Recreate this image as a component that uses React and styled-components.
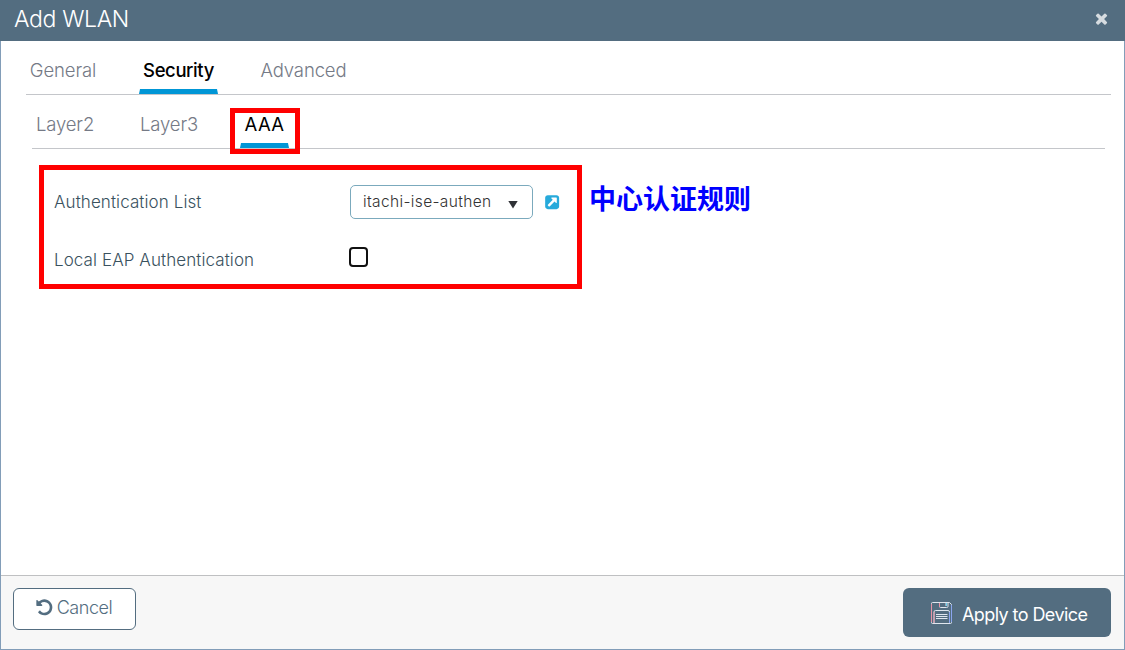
import React from 'react';
import styled, { createGlobalStyle } from 'styled-components';

const GlobalStyle = createGlobalStyle`
  * { box-sizing: border-box; }
  body { margin: 0; background: #fff; }
  button { font: inherit; }
`;

const Dialog = styled.div`
  width: 1125px;
  height: 650px;
  display: flex;
  flex-direction: column;
  background: #fff;
  font-family: Inter, 'Liberation Sans', 'Noto Sans CJK SC', sans-serif;
  font-weight: 300;
  overflow: hidden;
`;

const Header = styled.header`
  flex: none;
  height: 41px;
  display: flex;
  align-items: flex-start;
  justify-content: space-between;
  padding: 5px 17px 0 14px;
  background: #536d80;
  color: #fff;
`;

const Title = styled.h1`
  margin: 0;
  font-size: 23px;
  line-height: 28px;
  font-weight: 300;
  letter-spacing: -0.35px;
`;

const CloseButton = styled.button`
  display: flex;
  margin: 5px -2px 0 0;
  padding: 0;
  border: 0;
  background: none;
  color: #d6dce0;
`;

const Frame = styled.div`
  flex: 1;
  display: flex;
  flex-direction: column;
  border: 1px solid #829db8;
  border-top: 0;
`;

const Body = styled.main`
  flex: 1;
  padding: 0 13px 0 25px;
`;

const TabRow = styled.nav`
  display: flex;
  height: 54px;
  border-bottom: 1px solid #c4c6ca;
  margin: ${(p) => (p.$nested ? '0 6px' : '0')};
`;

const Tab = styled.div`
  position: relative;
  width: ${(p) => p.$width}px;
  margin-left: ${(p) => p.$gap || 0}px;
  padding-top: 17px;
  text-align: center;
  white-space: nowrap;
  font-size: 18.5px;
  line-height: 24px;
  letter-spacing: ${(p) => p.$spacing || '-0.12px'};
  color: ${(p) => (p.$active ? '#000' : '#757a86')};
  font-weight: ${(p) => p.$weight || 300};

  &::after {
    content: '';
    display: ${(p) => (p.$active ? 'block' : 'none')};
    position: absolute;
    left: 0;
    right: 0;
    bottom: 0;
    height: 5px;
    background: #0096d6;
    clip-path: polygon(1px 0, calc(100% - 1px) 0, 100% 100%, 0 100%);
  }
`;

const TabMarker = styled.span`
  position: absolute;
  z-index: 1;
  left: -10px;
  top: 13px;
  width: 70px;
  height: 46px;
  border: 5px solid #f00;
`;

const Content = styled.section`
  display: flex;
  align-items: flex-start;
  padding: 16px 0 0 13px;
`;

const Settings = styled.div`
  width: 543px;
  height: 124px;
  border: 5px solid #f00;
  padding: 3px 0 0 10px;
`;

const Field = styled.div`
  display: flex;
  align-items: center;
  height: 58px;
`;

const Label = styled.label`
  width: ${(p) => p.$width}px;
  font-size: 17px;
  line-height: 24px;
  color: #39515e;
  letter-spacing: 0.09px;
`;

const Select = styled.div`
  display: flex;
  align-items: center;
  justify-content: space-between;
  width: 183px;
  height: 34px;
  padding: 0 14px 2px 12px;
  border: 1px solid #7baabd;
  border-radius: 5px;
  font-size: 15.5px;
  color: #333;
  letter-spacing: 0.36px;
`;

const Caret = styled.span`
  width: 10px;
  height: 8px;
  margin-top: 7px;
  background: #2f3136;
  clip-path: polygon(0 0, 100% 0, 50% 100%);
`;

const LinkIcon = styled.span`
  display: flex;
  margin-left: 11px;
  color: #27aadb;
`;

const Checkbox = styled.span`
  width: 19px;
  height: 20px;
  margin-top: -6px;
  border: 2px solid #111;
  border-radius: 4px;
  background: #fff;
`;

const Note = styled.strong`
  margin: 13px 0 0 7px;
  font-family: 'Noto Sans CJK SC', sans-serif;
  font-size: 27px;
  line-height: 40px;
  font-weight: 700;
  color: #00f;
`;

const Footer = styled.footer`
  flex: none;
  height: 74px;
  display: flex;
  align-items: flex-start;
  justify-content: space-between;
  padding: 12px 13px 0 12px;
  border-top: 1px solid #bfc0c2;
  background: #f7f7f7;
`;

const Button = styled.button`
  display: flex;
  align-items: center;
  width: ${(p) => (p.$primary ? 208 : 123)}px;
  height: ${(p) => (p.$primary ? 49 : 42)}px;
  padding: ${(p) => (p.$primary ? '4px 0 0 28px' : '0 0 3px 21px')};
  gap: ${(p) => (p.$primary ? 10 : 3)}px;
  border: ${(p) => (p.$primary ? '0' : '1px solid #536d80')};
  border-radius: 6px;
  background: ${(p) => (p.$primary ? '#536d80' : '#fff')};
  color: ${(p) => (p.$primary ? '#fff' : '#536d80')};
  font-size: 18px;
  font-weight: ${(p) => (p.$primary ? 400 : 300)};
  letter-spacing: ${(p) => p.$spacing};
  white-space: nowrap;
`;

const SaveSvg = styled.svg`
  margin-top: -3px;
`;

const glyphs = {
  close:
    'M1490 1322q0 40-28 68l-136 136q-28 28-68 28t-68-28l-294-294-294 294q-28 28-68 28t-68-28l-136-136q-28-28-28-68t28-68l294-294-294-294q-28-28-28-68t28-68l136-136q28-28 68-28t68 28l294 294 294-294q28-28 68-28t68 28l136 136q28 28 28 68t-28 68l-294 294 294 294q28 28 28 68z',
  undo:
    'M1664 896q0 156-61 298t-164 245-245 164-298 61q-172 0-327-72.5t-264-204.5q-7-10-6.5-22.5t8.5-20.5l137-138q10-9 25-9 16 2 23 12 73 95 179 147t225 52q104 0 198.5-40.5t163.5-109.5 109.5-163.5 40.5-198.5-40.5-198.5-109.5-163.5-163.5-109.5-198.5-40.5q-98 0-188 35.5t-160 101.5l137 138q31 30 14 69-17 40-59 40h-448q-26 0-45-19t-19-45v-448q0-42 40-59 39-17 69 14l130 129q107-101 244.5-156.5t284.5-55.5q156 0 298 61t245 164 164 245 61 298z',
  external:
    'M1408 928v-480q0-26-19-45t-45-19h-480q-42 0-59 39-17 41 14 70l144 144-534 534q-19 19-19 45t19 45l102 102q19 19 45 19t45-19l534-534 144 144q18 19 45 19 12 0 25-5 39-17 39-59zm256-512v960q0 119-84.5 203.5t-203.5 84.5h-960q-119 0-203.5-84.5t-84.5-203.5v-960q0-119 84.5-203.5t203.5-84.5h960q119 0 203.5 84.5t84.5 203.5z',
};

const Glyph = ({ name, size }) => (
  <svg width={size} height={size} viewBox="0 0 1792 1792" fill="currentColor">
    <path d={glyphs[name]} />
  </svg>
);

const SaveIcon = () => (
  <SaveSvg width="21" height="22" viewBox="0 0 21 22" fill="none" stroke="#dfe6ee">
    <path d="M.5 1.5q0-1 1-1H18.500l2 2v18q0 1-1 1h-18q-1 0-1-1z" />
    <path d="M8.500.5v4q0 1 1 1h6q1.500 0 1.500-1v-4M15 1v3" />
    <path d="M3 21v-11q0-1.500 1.500-1.500h12.500q1.500 0 1.500 1.500v11" />
    <path d="M5 12.500h11.500M5 14.500h11.500M5 16.500h11.500" />
    <path d="M.5 2v18M3 10v11M8.500 1v4" stroke="#e793a5" />
    <path d="M20.500 3v17M18.500 10v11" stroke="#8aa5ef" />
    <path d="M15.500 1v3" stroke="#6fd0ee" />
  </SaveSvg>
);

export default function App() {
  return (
    <Dialog>
      <GlobalStyle />
      <Header>
        <Title>Add WLAN</Title>
        <CloseButton aria-label="Close">
          <Glyph name="close" size={17} />
        </CloseButton>
      </Header>
      <Frame>
        <Body>
          <TabRow>
            <Tab $width={74}>General</Tab>
            <Tab $width={79} $gap={39} $active $weight={500} $spacing="-0.4px">Security</Tab>
            <Tab $width={93} $gap={39}>Advanced</Tab>
          </TabRow>
          <TabRow $nested>
            <Tab $width={66}>Layer2</Tab>
            <Tab $width={66} $gap={38}>Layer3</Tab>
            <Tab $width={49} $gap={38} $active $weight={400} $spacing="0.4px">
              AAA
              <TabMarker />
            </Tab>
          </TabRow>
          <Content>
            <Settings>
              <Field>
                <Label $width={296}>Authentication List</Label>
                <Select>
                  itachi-ise-authen
                  <Caret />
                </Select>
                <LinkIcon>
                  <Glyph name="external" size={16.3} />
                </LinkIcon>
              </Field>
              <Field>
                <Label $width={295}>Local EAP Authentication</Label>
                <Checkbox role="checkbox" aria-checked="false" />
              </Field>
            </Settings>
            <Note>中心认证规则</Note>
          </Content>
        </Body>
        <Footer>
          <Button $spacing="-0.45px">
            <Glyph name="undo" size={18.7} />
            Cancel
          </Button>
          <Button $primary $spacing="-0.58px">
            <SaveIcon />
            Apply to Device
          </Button>
        </Footer>
      </Frame>
    </Dialog>
  );
}
